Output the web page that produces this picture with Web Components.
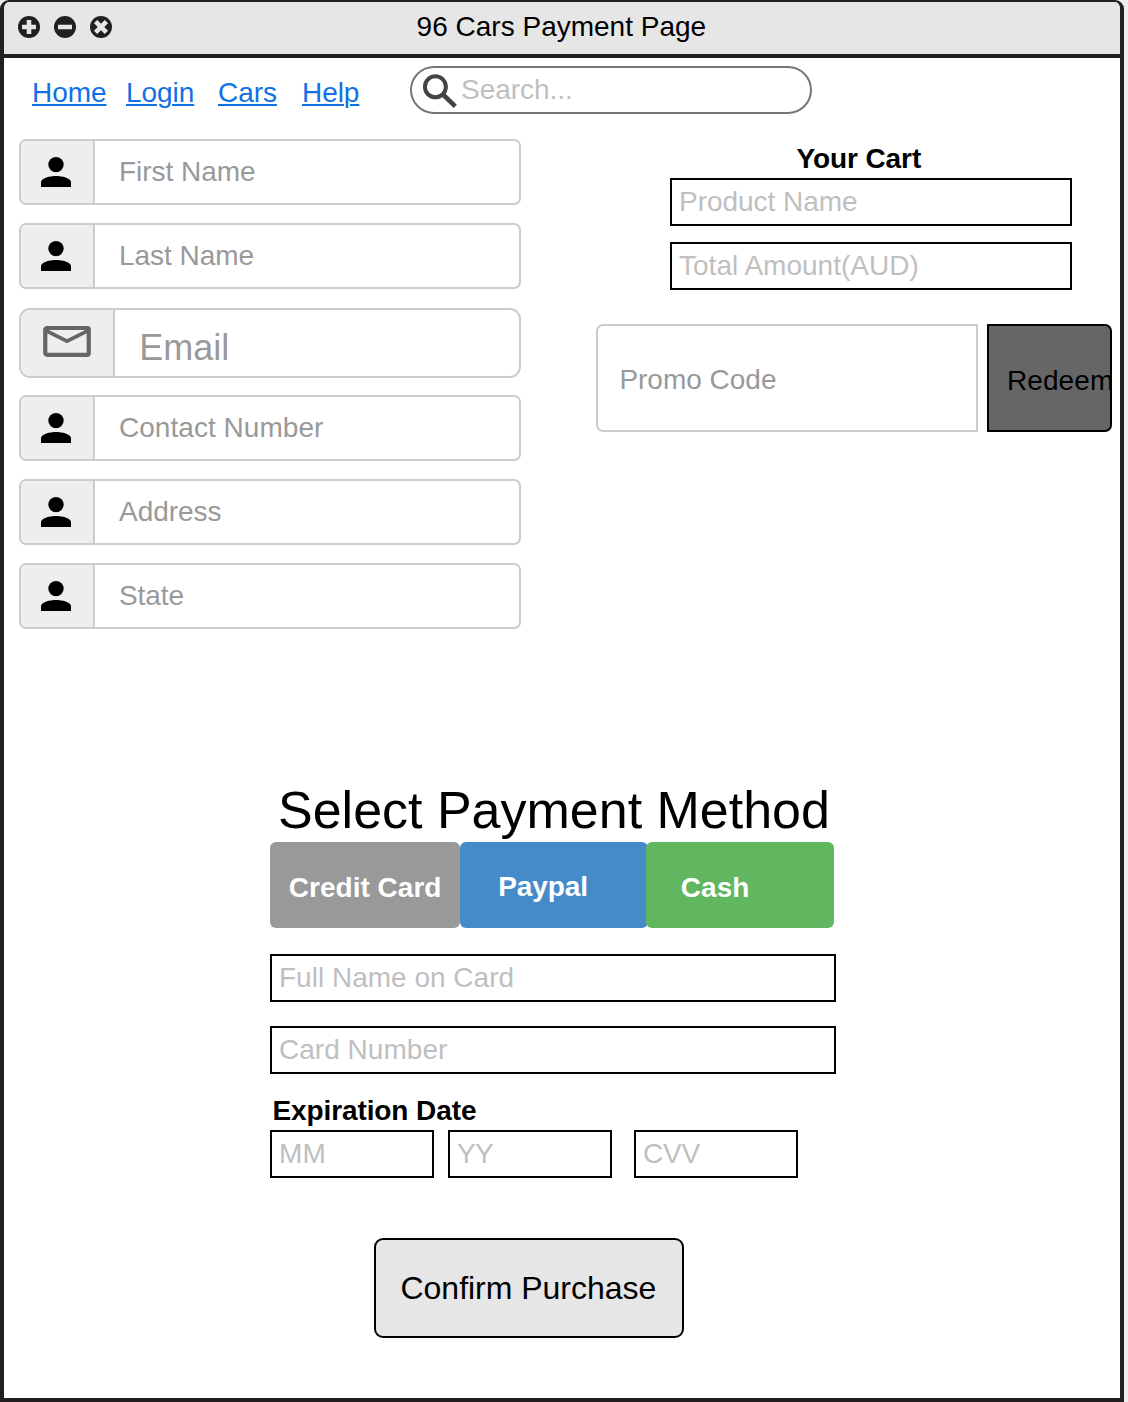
<!DOCTYPE html>
<html lang="en">
<head>
<meta charset="utf-8">
<title>96 Cars Payment Page</title>
<style>
html,body{margin:0;background:#ededed}
body{width:1128px;height:1402px;overflow:hidden;font-family:"Liberation Sans",Arial,sans-serif;font-size:28px;line-height:31px;color:#000}
</style>
</head>
<body>
<payment-page></payment-page>
<script>
const define = (name, html, setup) => customElements.define(name, class extends HTMLElement {
  connectedCallback() {
    if (this.shadowRoot) return;
    const t = document.createElement('template');
    t.innerHTML = html;
    this.attachShadow({mode: 'open'}).append(t.content.cloneNode(true));
    if (setup) setup(this, this.shadowRoot);
  }
});

// A single line of text whose drawn glyphs span `w` pixels.
const pen = document.createElement('canvas').getContext('2d');
define('fit-text', `<style>:host{display:block;white-space:nowrap;flex:none}</style><slot></slot>`, el => {
  const s = getComputedStyle(el);
  pen.font = `${s.fontWeight} ${s.fontSize} "Liberation Sans", Arial, sans-serif`;
  const text = el.textContent, m = pen.measureText(text);
  const ink = m.actualBoundingBoxLeft + m.actualBoundingBoxRight;
  el.style.letterSpacing = ((+el.getAttribute('w') - ink) / (text.length - 1)).toFixed(3) + 'px';
});

define('nav-link', `<style>
:host{display:block;color:#1071e5}
a{color:inherit;white-space:nowrap;letter-spacing:-.06px;text-decoration:underline;text-decoration-thickness:2px;text-underline-offset:2px}
</style><a><slot></slot></a>`);

define('search-box', `<style>
:host{display:flex;box-sizing:border-box;width:402px;height:48px;border:2px solid #777;border-radius:24px;background:#fff;color:#bfbfbf;padding:6px 0 0 10px}
svg{flex:none;width:39px;height:36px}
</style>
<svg viewBox="422 74 39 36" fill="none" stroke="#444"><circle cx="435.4" cy="86.8" r="10.5" stroke-width="4"/><path d="M442.5 94L455.3 106.3" stroke-width="4.6"/></svg>
<fit-text w="109">Search...</fit-text>`);

define('icon-person', `<style>:host{display:block}svg{display:block;width:46px;height:46px}</style>
<svg viewBox="0 0 46 46"><circle cx="23" cy="15.6" r="7.7"/><path d="M23 27c-6 0-15 2-15 6.2v4.8h30v-4.8c0-4.2-9-6.2-15-6.2z"/></svg>`);

define('icon-mail', `<style>:host{display:block}svg{display:block;width:48px;height:31px}</style>
<svg viewBox="0 0 48 31" fill="none" stroke="#666"><rect x="2.25" y="2" width="43.5" height="26.8" rx="1.8" stroke-width="4.2"/><path d="M3 4.6L24 15.2L45 4.6" stroke-width="3.6"/></svg>`);

define('icon-field', `<style>
:host{display:flex;box-sizing:border-box;width:502px;height:66px;border:2px solid #ccc;border-radius:7px;overflow:hidden;background:#fff;color:#999}
.icon{box-sizing:border-box;flex:none;width:74px;background:#eee;border-right:2px solid #ccc;padding:8px 0 0 12px}
.label{padding:15px 0 0 24px}
:host([large]){height:70px;border-radius:11px;font-size:36px;line-height:41px}
:host([large]) .icon{width:94px;padding:16px 0 0 22px}
:host([large]) .label{padding:17px 0 0 24.3px}
</style><div class="icon"><slot name="icon"></slot></div><div class="label"><slot></slot></div>`);

define('plain-field', `<style>
:host{display:block;box-sizing:border-box;height:48px;border:2px solid #000;background:#fff;color:#bfbfbf;padding:6px 0 0 7px}
</style><slot></slot>`);

define('pay-option', `<style>
:host{display:block;box-sizing:border-box;width:188px;height:86px;border-radius:6px;color:#fff;font-weight:bold;padding-top:30px;background:var(--fill)}
</style><slot></slot>`);

define('title-bar', `<style>
:host{display:flex;height:52px;background:#e6e6e6;border-bottom:4px solid #231f20}
svg{flex:none;width:412.6px;height:52px}
.t{padding-top:9px}
</style>
<svg viewBox="4 2 412.6 52"><g fill="#231f20"><circle cx="29" cy="27" r="11"/><circle cx="65" cy="27" r="11"/><circle cx="101" cy="27" r="11"/></g>
<g stroke="#e6e6e6" stroke-width="4.6"><path d="M22 27H36M29 20V34M58 27H72"/><path d="M95.6 21.6L106.4 32.4M106.4 21.6L95.6 32.4"/></g></svg>
<div class="t"><fit-text w="288">96 Cars Payment Page</fit-text></div>`);

define('customer-form', `<style>
:host{display:flex;flex-direction:column;gap:18px;width:502px}
[large]{margin:1px 0 -1px}
</style>
<icon-field><icon-person slot="icon"></icon-person><fit-text w="134">First Name</fit-text></icon-field>
<icon-field><icon-person slot="icon"></icon-person><fit-text w="132.5">Last Name</fit-text></icon-field>
<icon-field large><icon-mail slot="icon"></icon-mail><fit-text w="86">Email</fit-text></icon-field>
<icon-field><icon-person slot="icon"></icon-person><fit-text w="203">Contact Number</fit-text></icon-field>
<icon-field><icon-person slot="icon"></icon-person><fit-text w="101.5">Address</fit-text></icon-field>
<icon-field><icon-person slot="icon"></icon-person><fit-text w="63.5">State</fit-text></icon-field>`);

define('cart-panel', `<style>
:host{display:flex;flex-direction:column;width:516px;padding-top:4px}
h2{margin:0 0 4px 200.4px;font-size:28px;line-height:31px}
.fields{display:flex;flex-direction:column;gap:16px;width:402px;margin-left:74px}
.promo{display:flex;gap:9px;margin-top:34px}
.code,.redeem{box-sizing:border-box;height:108px}
.code{width:382px;border:2px solid #ccc;border-radius:7px 0 0 7px;color:#999;padding:38px 0 0 21.4px}
.redeem{width:125px;border:2px solid #000;border-radius:0 7px 7px 0;background:#666;padding:39px 0 0 17.9px;overflow:hidden}
</style>
<h2><fit-text w="124.5">Your Cart</fit-text></h2>
<div class="fields">
<plain-field><fit-text w="176">Product Name</fit-text></plain-field>
<plain-field><fit-text w="240">Total Amount(AUD)</fit-text></plain-field></div>
<div class="promo"><div class="code"><fit-text w="154.5">Promo Code</fit-text></div>
<div class="redeem"><fit-text w="103">Redeem</fit-text></div></div>`);

define('payment-form', `<style>
:host{display:flex;flex-direction:column;width:566px}
h1{margin:0 0 3px 8px;font-size:52px;line-height:58px;font-weight:normal}
.options{display:flex;margin-bottom:26px}
.card{--fill:#999;width:190px;padding-left:18.8px}
.paypal{--fill:#468bc9;padding:29px 0 0 38.2px}
.cash{--fill:#60b760;margin-left:-2px;padding-left:34.8px}
.number{margin:24px 0 21px}
h3{margin:0 0 4px 2.4px;font-size:28px;line-height:31px}
.row{display:flex}
.row plain-field{width:164px}
.yy{margin:0 22px 0 14px}
</style>
<h1><fit-text w="547">Select Payment Method</fit-text></h1>
<div class="options">
<pay-option class="card"><fit-text w="150.5">Credit Card</fit-text></pay-option>
<pay-option class="paypal"><fit-text w="87">Paypal</fit-text></pay-option>
<pay-option class="cash"><fit-text w="66.5">Cash</fit-text></pay-option></div>
<plain-field><fit-text w="231.5">Full Name on Card</fit-text></plain-field>
<plain-field class="number"><fit-text w="167">Card Number</fit-text></plain-field>
<h3><fit-text w="202.5">Expiration Date</fit-text></h3>
<div class="row"><plain-field><fit-text w="43.5">MM</fit-text></plain-field>
<plain-field class="yy"><fit-text w="37">YY</fit-text></plain-field>
<plain-field><fit-text w="56.5">CVV</fit-text></plain-field></div>`);

define('confirm-button', `<style>
:host{display:block;box-sizing:border-box;width:310px;height:100px;border:2px solid #000;border-radius:9px;background:#e6e6e6;font-size:32px;line-height:36px;padding:30px 0 0 24.5px}
</style><slot></slot>`);

define('payment-page', `<style>
:host{display:flex;flex-direction:column;box-sizing:border-box;width:1124px;height:1402px;border:4px solid #231f20;border-top-width:2px;border-radius:9px 9px 0 0;background:#fff;overflow:hidden}
header{display:flex;padding:8px 0 0 28px;height:73px;box-sizing:border-box}
nav{display:flex;padding-top:11px;width:378px}
nav-link{width:94px}
nav-link:nth-child(2){width:92px}
nav-link:nth-child(3){width:84px}
.top{display:flex;justify-content:space-between;padding:8px 8px 0 15px}
customer-form,cart-panel{flex:none}
payment-form{margin:152px 0 0 266px}
confirm-button{margin:60px 0 0 370px}
</style>
<title-bar></title-bar>
<header><nav><nav-link>Home</nav-link><nav-link>Login</nav-link><nav-link>Cars</nav-link><nav-link>Help</nav-link></nav><search-box></search-box></header>
<section class="top"><customer-form></customer-form><cart-panel></cart-panel></section>
<payment-form></payment-form>
<confirm-button><fit-text w="254">Confirm Purchase</fit-text></confirm-button>`);
</script>
</body>
</html>
